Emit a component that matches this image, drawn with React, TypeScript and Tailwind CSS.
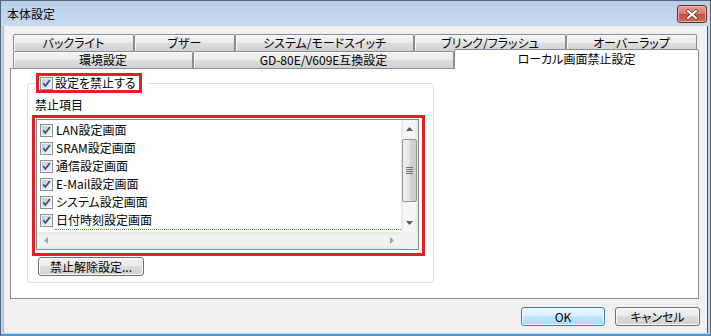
import React from 'react';

const rowOneTabs = [
  { label: 'バックライト', w: 'w-[121px]' },
  { label: 'ブザー', w: 'w-[101px]' },
  { label: 'システム/モードスイッチ', w: 'w-[179px]' },
  { label: 'ブリンク/フラッシュ', w: 'w-[152px]' },
  { label: 'オーバーラップ', w: 'w-[131px]' },
];

const rowTwoTabs = [
  { label: '環境設定', w: 'w-[180px]' },
  { label: 'GD-80E/V609E互換設定', w: 'w-[261px]' },
];

const items = ['LAN設定画面', 'SRAM設定画面', '通信設定画面', 'E-Mail設定画面', 'システム設定画面', '日付時刻設定画面'];

const CheckBox = () => (
  <svg width="13" height="13" viewBox="0 0 13 13" className="shrink-0">
    <defs>
      <linearGradient id="cbfill" x1="0" y1="0" x2="1" y2="1">
        <stop offset="0" stopColor="#c3c8cf" />
        <stop offset="1" stopColor="#f4f4f4" />
      </linearGradient>
    </defs>
    <rect x="0.5" y="0.5" width="12" height="12" fill="#f6f6f6" stroke="#8e8f8f" />
    <rect x="2" y="2" width="9" height="9" fill="url(#cbfill)" />
    <path d="M3.2 6.3 L5.4 8.9 L9.9 3" fill="none" stroke="#2b4d8f" strokeWidth="1.7" />
  </svg>
);

const tabClass =
  'flex items-center justify-center border border-b-0 border-[#898c95] rounded-t-[2px] bg-[linear-gradient(#f3f3f3,#ebebeb_50%,#dddddd_50%,#d2d2d2)] shadow-[inset_1px_1px_0_#fbfbfb] text-[12px] leading-none';

const grayBtn =
  'flex items-center justify-center border border-[#707070] rounded-[3px] bg-[linear-gradient(#f2f2f2,#ebebeb_50%,#dddddd_50%,#cfcfcf)] shadow-[inset_0_0_0_1px_#fbfbfb] text-[12px] leading-none';

export default function App() {
  return (
    <div className="w-[711px] h-[336px] flex flex-col bg-[#c2d6ed] border-t border-x border-[#56657a] border-b-2 border-b-[#3d9fd0] font-['Noto_Sans_CJK_JP',sans-serif] [font-feature-settings:'palt'] text-black overflow-hidden">
      {/* Title bar */}
      <div className="h-[25px] flex items-start justify-between pl-[6px] bg-linear-to-b from-[#b8cfe9] to-[#c7daf0]">
        <span className="pt-[6px] text-[12px] leading-[14px]">本体設定</span>
        <button className="mt-[4px] mr-[3px] w-[30px] h-[18px] flex items-center justify-center border border-[#6b2c25] rounded-[3px] bg-[linear-gradient(#e8a196,#d57566_50%,#c44a3a_50%,#cf6d55)] shadow-[inset_0_0_0_1px_#eab3aa]">
          <svg width="14" height="11" viewBox="0 0 14 11">
            <path d="M3 2 L11 9 M11 2 L3 9" stroke="#5b2a24" strokeWidth="3.6" strokeLinecap="round" />
            <path d="M3 2 L11 9 M11 2 L3 9" stroke="#ffffff" strokeWidth="2.2" strokeLinecap="round" />
          </svg>
        </button>
      </div>

      {/* Body */}
      <div className="flex-1 flex px-[2px] pb-[1px]">
        <div className="flex-1 flex flex-col bg-[#f0f0f0] border-l border-l-[#a3b7cd] border-r border-r-[#4a4f55]">
          {/* Tab control */}
          <div className="ml-[6px] mt-[8px] w-[689px]">
            <div className="flex h-[17px] pl-[3px]">
              {rowOneTabs.map((t) => (
                <div key={t.label} className={`${tabClass} ${t.w} h-[17px]`}>
                  {t.label}
                </div>
              ))}
            </div>
            <div className="relative z-10 flex items-end h-[17px] pl-[3px]">
              {rowTwoTabs.map((t) => (
                <div key={t.label} className={`${tabClass} ${t.w} h-[17px]`}>
                  {t.label}
                </div>
              ))}
              <div className="w-[245px] h-[20px] -mb-[1px] flex items-start justify-center pt-[3px] border border-b-0 border-[#898c95] rounded-t-[2px] bg-white text-[12px] leading-none">
                ローカル画面禁止設定
              </div>
            </div>

            {/* Tab page */}
            <div className="h-[231px] border border-[#898c95] bg-white pl-[16px] pt-[4px]">
              <fieldset className="w-[407px] h-[210px] border border-[#d5dfe5] rounded-[3px] pl-[7px]">
                <legend className="ml-[1px] pr-[6px]">
                  <div className="w-[106px] h-[20px] flex items-center gap-[2px] pl-[1px] border-[3px] border-[#ed1c24] text-[12px] leading-none">
                    <CheckBox />
                    <span>設定を禁止する</span>
                  </div>
                </legend>

                <div className="mt-[5px] h-[14px] text-[12px] leading-[14px]">禁止項目</div>

                {/* List with red outline */}
                <div className="-ml-[3px] mt-[3px] w-[393px] h-[141px] border-[3px] border-[#ed1c24] pl-[1px] pt-[1px]">
                  <div className="w-[383px] h-[131px] flex flex-col border border-[#828790] bg-white">
                    <div className="flex h-[112px]">
                      <div className="flex-1 pt-[1px] overflow-hidden">
                        {items.map((it) => (
                          <div key={it} className="h-[18px] flex items-center gap-[3px] pl-[3px] text-[12px] leading-none">
                            <CheckBox />
                            <span>{it}</span>
                          </div>
                        ))}
                        <div className="ml-[18px] h-0 border-t border-dotted border-[#3f84d6]" />
                      </div>
                      {/* Vertical scrollbar */}
                      <div className="w-[17px] flex flex-col bg-[linear-gradient(90deg,#e6e6e6,#f5f5f5_20%,#f5f5f5_80%,#e9e9e9)]">
                        <div className="h-[18px] flex items-center justify-center">
                          <svg width="7" height="4" viewBox="0 0 7 4">
                            <path d="M3.5 0 L7 4 L0 4 Z" fill="#5a5a5a" />
                          </svg>
                        </div>
                        <div className="mt-[1px] mx-[1px] h-[63px] flex items-center justify-center border border-[#979797] rounded-[2px] bg-[linear-gradient(90deg,#f0f0f0,#e4e4e4_50%,#d3d3d3_50%,#cdcdcd)]">
                          <svg width="7" height="7" viewBox="0 0 7 7">
                            <path d="M0 0.5 H7 M0 2.5 H7 M0 4.5 H7 M0 6.5 H7" stroke="#6e6e6e" strokeWidth="1" />
                          </svg>
                        </div>
                        <div className="flex-1" />
                        <div className="h-[18px] flex items-center justify-center">
                          <svg width="7" height="4" viewBox="0 0 7 4">
                            <path d="M0 0 L7 0 L3.5 4 Z" fill="#5a5a5a" />
                          </svg>
                        </div>
                      </div>
                    </div>
                    {/* Horizontal scrollbar */}
                    <div className="flex h-[17px]">
                      <div className="flex-1 flex items-center justify-between px-[7px] bg-[linear-gradient(#e6e6e6,#f2f2f2_25%,#f2f2f2_75%,#e8e8e8)]">
                        <svg width="4" height="7" viewBox="0 0 4 7">
                          <path d="M4 0 L4 7 L0 3.5 Z" fill="#a3a3a3" />
                        </svg>
                        <svg width="4" height="7" viewBox="0 0 4 7">
                          <path d="M0 0 L0 7 L4 3.5 Z" fill="#a3a3a3" />
                        </svg>
                      </div>
                      <div className="w-[17px] bg-[#f0f0f0]" />
                    </div>
                  </div>
                </div>

                <button className={`${grayBtn} ml-[3px] mt-[1px] w-[106px] h-[19px]`}>禁止解除設定...</button>
              </fieldset>
            </div>
          </div>

          {/* Dialog buttons */}
          <div className="mt-[8px] flex justify-end gap-[10px] pr-[7px]">
            <button className="w-[84px] h-[19px] flex items-center justify-center border border-[#3c7fb1] rounded-[3px] bg-[linear-gradient(#eaf6fd,#d9f0fc_50%,#bee6fd_50%,#a7d9f5)] shadow-[inset_0_0_0_1px_#f4fbfe] text-[12px] leading-none">
              OK
            </button>
            <button className={`${grayBtn} w-[85px] h-[19px]`}>キャンセル</button>
          </div>
        </div>
      </div>
    </div>
  );
}
